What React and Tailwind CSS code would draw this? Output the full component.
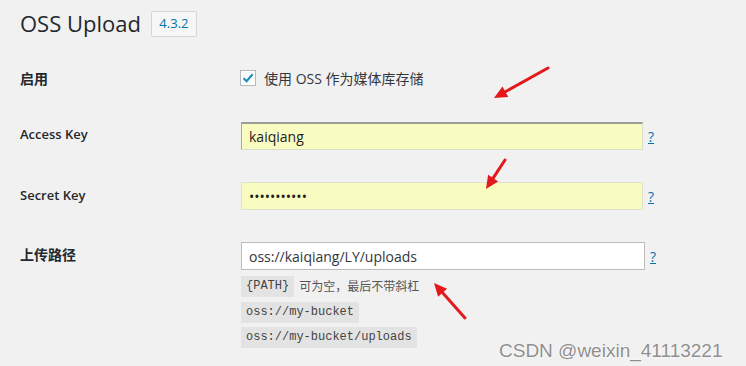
import { useState } from 'react'

const font = { fontFamily: '"Open Sans", "Noto Sans CJK SC", sans-serif' }

function Help() {
  return <a className="ml-[5px] text-[14px] text-[#0073aa] underline" href="#">?</a>
}

function Code({ children }) {
  return (
    <code className="block bg-[#e3e3e3] px-[5px] h-[21px] leading-[21px] text-[12px] text-[#444] font-['Liberation_Mono',monospace]">
      {children}
    </code>
  )
}

function Arrows() {
  const arrows = [
    [548, 68, 494, 98],
    [505, 160, 486, 189],
    [465, 318, 434, 283],
  ]
  return (
    <svg className="absolute inset-0 pointer-events-none" width="746" height="366">
      {arrows.map(([x1, y1, x2, y2], i) => {
        const a = Math.atan2(y2 - y1, x2 - x1)
        const len = 13
        const w = 6
        const bx = x2 - len * Math.cos(a)
        const by = y2 - len * Math.sin(a)
        const px = -Math.sin(a) * w
        const py = Math.cos(a) * w
        return (
          <g key={i}>
            <line x1={x1} y1={y1} x2={bx} y2={by} stroke="#e3191c" strokeWidth="3" strokeLinecap="round" />
            <polygon points={`${x2},${y2} ${bx + px},${by + py} ${bx - px},${by - py}`} fill="#e3191c" />
          </g>
        )
      })}
    </svg>
  )
}

export default function App() {
  const [enabled, setEnabled] = useState(true)

  return (
    <div className="relative w-[746px] h-[366px] overflow-hidden bg-[#f1f1f1] text-[#23282d] pl-[20px]" style={font}>
      <div className="flex items-center pt-[9px] h-[38px]">
        <h1 className="text-[22px] leading-[29px] font-normal">OSS Upload</h1>
        <span className="ml-[10px] inline-flex items-center justify-center w-[46px] h-[26px] border border-[#d5d5d5] bg-[#f6f6f6] rounded-[2px] text-[13px] text-[#0073aa]">
          4.3.2
        </span>
      </div>

      <div className="flex items-center mt-[32px] h-[16px]">
        <div className="w-[220px] text-[14px] font-semibold">启用</div>
        <label className="flex items-center text-[14px] text-[#32373c]">
          <span
            onClick={() => setEnabled(!enabled)}
            className="w-[16px] h-[16px] border border-[#b4b9be] bg-white flex items-center justify-center"
          >
            {enabled && (
              <svg width="14" height="14" viewBox="0 0 14 14">
                <path d="M2.5 7.2 L5.6 10.2 L11.6 3.2" fill="none" stroke="#1e8cbe" strokeWidth="2.2" />
              </svg>
            )}
          </span>
          <span className="ml-[8px]">使用 OSS 作为媒体库存储</span>
        </label>
      </div>

      <div className="flex items-center mt-[36px]">
        <div className="w-[221px] text-[13px] font-semibold pb-[2px]">Access Key</div>
        <input
          readOnly
          value="kaiqiang"
          className="w-[402px] h-[28px] bg-[#f9fcc0] border border-[#dcdcc8] border-t-2 border-t-[#9c9c92] border-l-[#a8a89c] px-[7px] text-[14px] text-[#222] outline-none"
        />
        <Help />
      </div>

      <div className="flex items-center mt-[32px]">
        <div className="w-[221px] text-[13px] font-semibold">Secret Key</div>
        <input
          readOnly
          type="password"
          value="xxxxxxxxxxx"
          className="w-[402px] h-[28px] bg-[#f9fcc0] border border-[#e2e2cc] px-[7px] text-[14px] text-[#222] outline-none"
        />
        <Help />
      </div>

      <div className="flex mt-[32px]">
        <div className="w-[221px] text-[14px] font-semibold pt-[2px]">上传路径</div>
        <div className="flex flex-col items-start">
          <div className="flex items-center">
            <input
              readOnly
              value="oss://kaiqiang/LY/uploads"
              className="w-[404px] h-[28px] bg-white border border-[#bcbcbc] px-[7px] text-[14px] text-[#32373c] outline-none"
            />
            <Help />
          </div>
          <div className="mt-[6px] flex items-center">
            <Code>{'{PATH}'}</Code>
            <span className="ml-[5px] text-[12px] text-[#555]">可为空，最后不带斜杠</span>
          </div>
          <div className="mt-[5px] flex"><Code>oss://my-bucket</Code></div>
          <div className="mt-[4px] flex"><Code>oss://my-bucket/uploads</Code></div>
        </div>
      </div>

      <Arrows />

      <div className="absolute left-[499px] top-[337px] text-[19px] text-[#8f8f8f] font-['Liberation_Sans',sans-serif] [text-shadow:0_0_2px_#fff,0_0_1px_#fff]">
        CSDN @weixin_41113221
      </div>
    </div>
  )
}
